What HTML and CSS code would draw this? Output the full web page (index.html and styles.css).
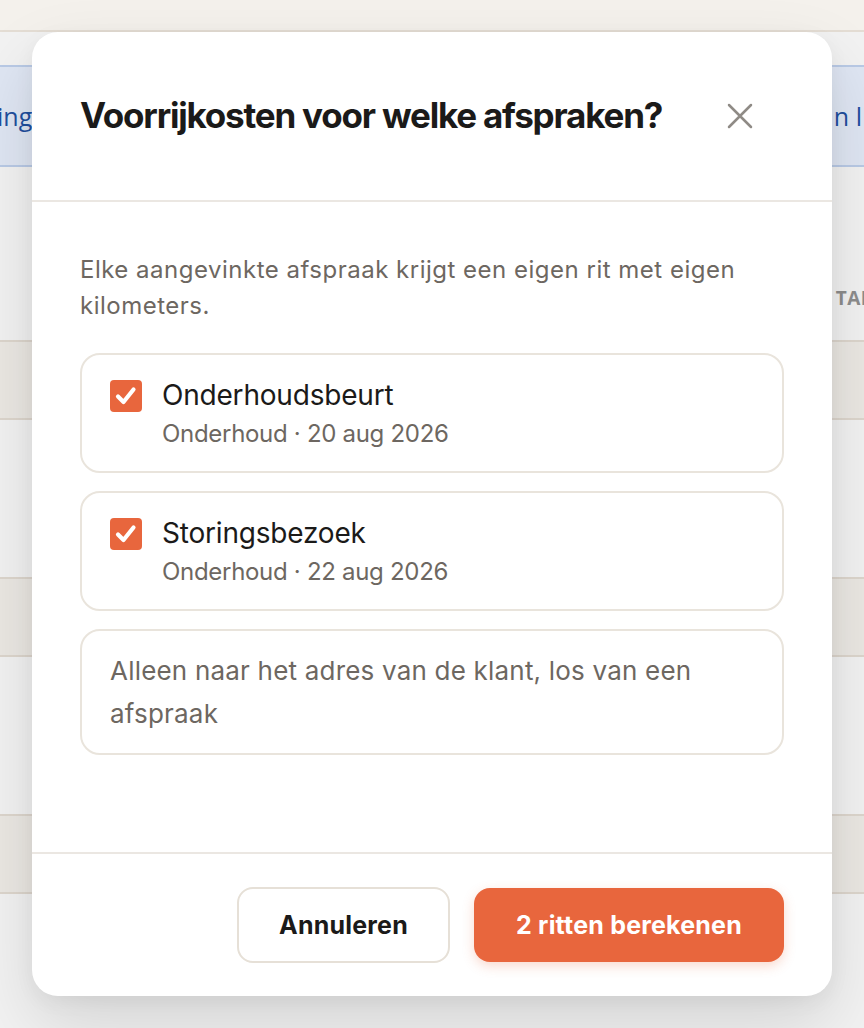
FILE: index.html
```html
<!DOCTYPE html>
<html lang="nl">
<head>
    <meta charset="UTF-8">
    <meta name="viewport" content="width=device-width, initial-scale=1.0">
    <title>Voorrijkosten</title>
    <link rel="stylesheet" href="styles.css">
</head>
<body>
    <div class="page">
        <div class="topbar"></div>
        <div class="tabs">
            <span class="tab-left">ing</span>
            <span class="tab-right">n l</span>
        </div>
        <div class="table-head"><span>TAL</span></div>
        <div class="row band"></div>
        <div class="row"></div>
        <div class="row band"></div>
        <div class="row"></div>
        <div class="row band"></div>
        <div class="row"></div>
    </div>

    <div class="modal">
        <div class="modal-header">
            <h2>Voorrijkosten voor welke afspraken?</h2>
            <button class="close" aria-label="Sluiten">
                <svg width="28" height="28" viewBox="0 0 28 28">
                    <path d="M3 3 L25 25 M25 3 L3 25" stroke="#8f8b86" stroke-width="2.5" stroke-linecap="round" fill="none"/>
                </svg>
            </button>
        </div>
        <div class="modal-body">
            <p class="intro">Elke aangevinkte afspraak krijgt een eigen rit met eigen kilometers.</p>
            <label class="option">
                <span class="check">
                    <svg width="24" height="24" viewBox="0 0 24 24"><path d="M4 12.5 L9.5 18 L19.5 5.5" stroke="#fff" stroke-width="4.2" fill="none" stroke-linecap="round" stroke-linejoin="round"/></svg>
                </span>
                <span class="option-text">
                    <span class="option-title">Onderhoudsbeurt</span>
                    <span class="option-sub">Onderhoud · 20 aug 2026</span>
                </span>
            </label>
            <label class="option">
                <span class="check">
                    <svg width="24" height="24" viewBox="0 0 24 24"><path d="M4 12.5 L9.5 18 L19.5 5.5" stroke="#fff" stroke-width="4.2" fill="none" stroke-linecap="round" stroke-linejoin="round"/></svg>
                </span>
                <span class="option-text">
                    <span class="option-title">Storingsbezoek</span>
                    <span class="option-sub">Onderhoud · 22 aug 2026</span>
                </span>
            </label>
            <label class="option plain">
                <span class="option-plain">Alleen naar het adres van de klant, los van een afspraak</span>
            </label>
        </div>
        <div class="modal-footer">
            <button class="btn btn-secondary">Annuleren</button>
            <button class="btn btn-primary">2 ritten berekenen</button>
        </div>
    </div>
</body>
</html>
```

FILE: styles.css
```css
html, body {
    margin: 0;
    padding: 0;
}
body {
    font-family: Inter, "Noto Sans", sans-serif;
    background: #f2f2f2;
    width: 864px;
    height: 1028px;
    overflow: hidden;
    position: relative;
}
.page {
    display: flex;
    flex-direction: column;
}
.topbar {
    height: 30px;
    background: #f4f1ec;
    border-bottom: 2px solid #e4ddd4;
}
.tabs {
    margin-top: 33px;
    height: 98px;
    background: #dfe6f3;
    border-top: 2px solid #b9cae6;
    border-bottom: 2px solid #b9cae6;
    display: flex;
    justify-content: space-between;
    align-items: center;
    font-family: "Open Sans", sans-serif;
    font-size: 25px;
    color: #1f4f9e;
    overflow: hidden;
}
.tab-left { margin-left: -3px; }
.tab-right { margin-right: 2px; }
.table-head {
    height: 173px;
    display: flex;
    justify-content: flex-end;
    align-items: flex-end;
    overflow: hidden;
}
.table-head span {
    font-family: "Open Sans", sans-serif;
    font-weight: 700;
    font-size: 19px;
    line-height: 26px;
    color: #8d8d8d;
    margin-right: -8px;
    margin-bottom: 29px;
    letter-spacing: 0.5px;
}
.row {
    height: 157px;
}
.row.band {
    height: 76px;
    background: #ebe8e3;
    border-top: 2px solid #ddd6cd;
    border-bottom: 2px solid #ddd6cd;
}

.modal {
    position: absolute;
    left: 32px;
    top: 32px;
    width: 800px;
    height: 964px;
    background: #fff;
    border-radius: 26px;
    box-shadow: 0 30px 70px rgba(0, 0, 0, 0.12), 0 6px 20px rgba(0, 0, 0, 0.05);
    display: flex;
    flex-direction: column;
}
.modal-header {
    height: 168px;
    border-bottom: 2px solid #ebe7e2;
    display: flex;
    align-items: center;
    justify-content: space-between;
    padding: 0 48px 0 48px;
}
.modal-header h2 {
    margin: 0;
    font-size: 35px;
    font-weight: 700;
    letter-spacing: -1.2px;
    color: #1b1a19;
    padding-bottom: 2px;
}
.close {
    border: none;
    background: none;
    padding: 0;
    margin-right: 30px;
    display: flex;
}
.modal-body {
    flex: 1;
    padding: 50px 48px 0 48px;
    display: flex;
    flex-direction: column;
    gap: 18px;
}
.intro {
    margin: 0 0 11px 0;
    font-size: 24px;
    line-height: 36px;
    color: #6d6761;
    letter-spacing: 0.5px;
}
.option {
    border: 2px solid #e9e4dc;
    border-radius: 20px;
    padding: 22px 28px 21px 28px;
    display: flex;
    gap: 20px;
    align-items: flex-start;
}
.check {
    width: 32px;
    height: 32px;
    background: #e8663d;
    border-radius: 4px;
    display: flex;
    align-items: center;
    justify-content: center;
    margin-top: 3px;
    flex-shrink: 0;
}
.option-text {
    display: flex;
    flex-direction: column;
}
.option-title {
    font-size: 28px;
    line-height: 36px;
    color: #1b1a19;
    letter-spacing: -0.2px;
}
.option-sub {
    font-size: 24px;
    line-height: 32px;
    margin-top: 5px;
    color: #6d6761;
    letter-spacing: -0.3px;
}
.option.plain {
    padding: 18px 28px 18px 28px;
}
.option-plain {
    font-size: 26px;
    line-height: 43px;
    color: #6d6761;
    letter-spacing: 0.2px;
}
.modal-footer {
    height: 142px;
    border-top: 2px solid #ebe7e2;
    display: flex;
    justify-content: flex-end;
    align-items: center;
    gap: 24px;
    padding: 0 48px 0 48px;
}
.btn {
    font-family: Inter, "Noto Sans", sans-serif;
    font-size: 25px;
    font-weight: 700;
    letter-spacing: 0.2px;
    border-radius: 16px;
    height: 76px;
}
.btn-secondary {
    width: 213px;
    background: #fff;
    border: 2px solid #e6e0d7;
    color: #1b1a19;
}
.btn-primary {
    width: 310px;
    height: 74px;
    background: #e8663d;
    border: none;
    color: #fff;
    box-shadow: 0 4px 12px rgba(232, 102, 61, 0.25);
}
```
